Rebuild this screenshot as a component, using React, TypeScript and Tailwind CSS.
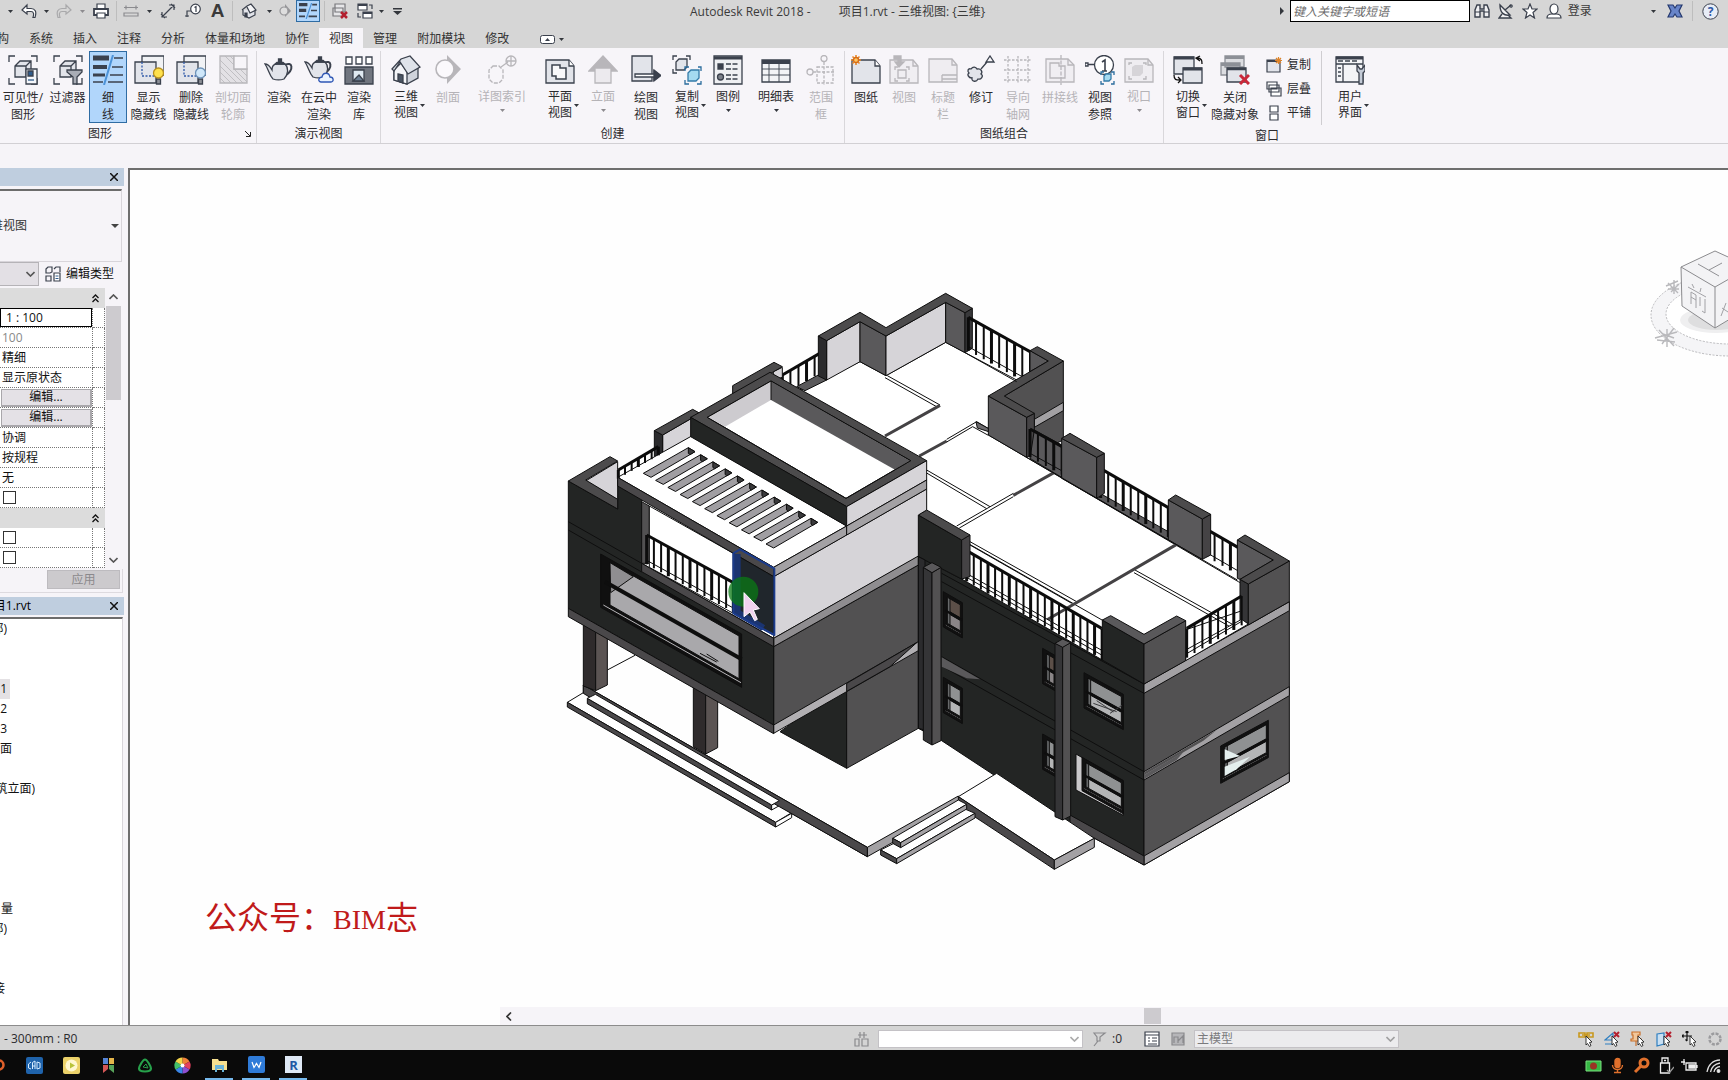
import type { ReactNode } from "react";
import clsx from "clsx";

const INK = "#3b414d";
const OFF = "#b8b6ba";
const PALE = "#e2e4ea";

type P = { children: ReactNode };

/* ---------- icons ---------- */

function Big({ children, off }: P & { off?: boolean }) {
  return (
    <svg width="30" height="30" viewBox="0 0 30 30" fill="none" stroke={off ? OFF : INK} strokeWidth="1.3">
      {children}
    </svg>
  );
}

function Small({ children }: P) {
  return (
    <svg width="16" height="16" viewBox="0 0 16 16" fill="none" stroke={INK} strokeWidth="1.2" className="shrink-0">
      {children}
    </svg>
  );
}

function Caret({ off }: { off?: boolean }) {
  return (
    <svg width="5" height="3" viewBox="0 0 5 3" className="shrink-0">
      <path d="M0 0h5L2.5 3z" fill={off ? "#8d8b8f" : "#33363c"} />
    </svg>
  );
}

const corners = "M1 7V1h6M23 1h6v6M29 23v6h-6M7 29H1v-6";
const cube = "M7 11l5-5h11v11l-5 5H7zM7 11h11v11M18 11l5-5";
const burst = "M5 0v10M0 5h10M1.5 1.5l7 7M8.5 1.5l-7 7";

const icons = {
  visibility: (
    <Big>
      <path d={corners} />
      <path d={cube} fill={PALE} />
      <path d="M18 14h11v15H18z" fill="#f4f6fa" />
      <path d="M20 16h5v5h-5z" fill="#2f5c8c" />
      <path d="M20 25h6" stroke="#2f5c8c" />
    </Big>
  ),
  filter: (
    <Big>
      <path d={corners} />
      <path d={cube} fill={PALE} />
      <path d="M14 15h15v2l-5 5v7h-4v-7l-6-5z" fill="#a9adb6" />
    </Big>
  ),
  thin: (
    <Big>
      <path d="M0 3h16" strokeWidth="5" />
      <path d="M0 12h14" strokeWidth="4" />
      <path d="M0 20h12" strokeWidth="3" />
      <path d="M0 27h10M21 3h9M19 12h11M17 20h13M15 27h15" strokeWidth="1.5" />
      <path d="M20 0L11 30" stroke="#4d93d8" strokeWidth="2" />
    </Big>
  ),
  showHidden: (
    <Big>
      <path d="M8 1h22v19H8z" fill="#f1f2f5" />
      <path d="M1 7h21v21H1z" fill={PALE} />
      <path d="M8 7v14h14" stroke="#3159a8" strokeDasharray="2 1.5" />
      <path d="M22.500 24h4v5h-4z" fill="#8c8f96" />
      <circle cx="24.500" cy="18" r="5" fill="#ffe14d" stroke="#b8901f" />
    </Big>
  ),
  removeHidden: (
    <Big>
      <path d="M8 1h22v19H8z" fill="#f1f2f5" />
      <path d="M1 7h21v21H1z" fill={PALE} />
      <path d="M8 7v14h14" stroke="#3159a8" strokeDasharray="2 1.5" />
      <path d="M22.500 24h4v5h-4z" fill="#8c8f96" />
      <circle cx="24.500" cy="18" r="5" fill="#cfe7fa" stroke="#6d92b8" />
    </Big>
  ),
  cutProfile: (
    <Big off>
      <path d="M2 1h14v13h13v14H2z" fill="#e3e1e5" />
      <path d="M16 1h13v13H16z" fill="#f7f5f9" />
      <path d="M2 5l23 23M2 11l17 17M2 17l11 11M2 23l5 5M7 1l9 9M16 14l13 13M12 1l4 4M22 14l7 7" strokeWidth=".8" />
    </Big>
  ),
  teapot: (
    <Big>
      <path d="M21 10c7-4 10 4 0 11" strokeWidth="2" />
      <path d="M1 9c4 0 5 3 7 6 0-4 2-6 5-6h8c4 4 3 11-1 15-3 1-8 1-11 0-4-4-4-9-8-15z" fill={PALE} />
      <path d="M11 9c2-3 8-3 10 0zM14.500 6h3V4h-3z" fill={INK} />
    </Big>
  ),
  teapotCloud: (
    <Big>
      <path d="M20 8c7-4 10 4 0 11" strokeWidth="2" />
      <path d="M1 7c4 0 5 3 7 6 0-4 2-6 5-6h8c4 4 3 11-1 15-3 1-8 1-11 0-4-4-4-9-8-15z" fill={PALE} />
      <path d="M11 7c2-3 8-3 10 0zM14.500 4h3V2h-3z" fill={INK} />
      <path d="M17 27c-4-1-2-5 1-5 1-5 7-5 8 0 4 0 4 5 1 5z" fill="#eaf3ff" stroke="#2f57b5" />
    </Big>
  ),
  gallery: (
    <Big>
      <path d="M2 2h6v7H2zM12 2h6v7h-6zM22 2h6v7h-6z" fill="#fff" />
      <path d="M1 12h28v17H1z" fill="#70757f" />
      <path d="M9 15h11v11H9z" fill="#dfe9f2" />
      <path d="M9 26l6-6 5 6z" fill="#6d8096" />
    </Big>
  ),
  house: (
    <Big>
      <path d="M3 15v10l13 4 11-6V12L18 3z" fill="#cfd3db" />
      <path d="M3 15l7-7 6 9v12L3 25z" fill="#f4f5f8" />
      <path d="M1 14l9-10L19 1l10 11-12 7L9 7l-6 9z" fill="#dfe3ea" />
      <path d="M7 19l5 1v8l-5-2z" fill="#4b5563" />
    </Big>
  ),
  section: (
    <Big off>
      <path d="M14 0v5l-4 9 4 10v5l14-15z" fill="#b8b6ba" stroke="none" />
      <path d="M12 0v30" stroke="none" />
      <circle cx="12" cy="14" r="9" fill="#fbf9fc" strokeWidth="1.600" />
    </Big>
  ),
  callout: (
    <Big off>
      <path d="M6 11h6l4 4v9l-4 4H6l-4-4v-9z" strokeDasharray="4 1.500" />
      <path d="M14 12l7-5M19 6h10M24 1v10" />
      <circle cx="24" cy="6" r="5" />
    </Big>
  ),
  plan: (
    <Big>
      <path d="M1 5h23l5 6v17H1z" fill={PALE} />
      <path d="M24 5v6h5" fill="#fff" />
      <path d="M7 10h8v3h6v11H11v-3H7z" fill="#f8f8fa" strokeWidth="1.500" />
    </Big>
  ),
  elevation: (
    <Big off>
      <path d="M15 1l14 15H1z" fill="#b8b6ba" />
      <path d="M7 13h16v15H7z" fill="#eceaee" />
    </Big>
  ),
  drafting: (
    <Big>
      <path d="M1 1h20v25H1z" fill={PALE} />
      <path d="M4 19h19v-3l6 4.500-6 4.500v-3H4z" fill="#fff" />
      <path d="M23 15l7 5.500-7 5.500z" fill={INK} />
    </Big>
  ),
  duplicate: (
    <Big>
      <path d="M1 5V1h4M14 1h4v4M1 14v4h4" />
      <path d="M4 7l3-3h8v8l-3 3H4z" fill={PALE} />
      <path d="M13 16v-4h4M26 12h3v4M29 26v3h-4M17 29h-4v-4" stroke="#2b6c9d" />
      <path d="M16 18l3-3h8v8l-3 3h-8z" fill="#a5daf0" stroke="#357ba8" />
    </Big>
  ),
  legend: (
    <Big>
      <path d="M1 1h28v28H1z" fill="#eff0f3" />
      <path d="M1 3h28" strokeWidth="3" />
      <path d="M5 9h5v5H5z" fill={INK} />
      <circle cx="7.500" cy="22" r="3" fill="#7b8089" />
      <path d="M13 9h13M13 14h13M13 20h13M13 24h13" strokeDasharray="5 1.500" />
    </Big>
  ),
  schedule: (
    <Big>
      <path d="M1 5h28v22H1z" fill="#f3f4f7" />
      <path d="M1 7h28" strokeWidth="4" />
      <path d="M8 9v18M1 14h28M1 20h28M18 9v18" strokeWidth=".9" />
    </Big>
  ),
  scopeBox: (
    <Big off>
      <path d="M11 12h16v16H11zM18 7v23M7 17h22" strokeDasharray="3 1.500" />
      <circle cx="18" cy="3.500" r="3" />
      <circle cx="4" cy="17" r="3" />
    </Big>
  ),
  sheet: (
    <Big>
      <path d="M1 5h23l5 6v17H1z" fill={PALE} />
      <path d="M24 5v6h5" fill="#fff" />
      <path d={burst} stroke="#e8892b" strokeWidth="1.600" />
      <circle cx="5" cy="5" r="2.500" fill="#ffc864" stroke="#d56a15" />
    </Big>
  ),
  placeView: (
    <Big off>
      <path d="M1 5h23l5 6v17H1z" fill="#f0eef2" />
      <path d="M24 5v6h5M6 15v-3h3M17 12h3v3M20 23v3h-3M9 26H6v-3M9 15h8v8H9z" />
      <path d="M5 1h7v6h3l-5 5-4-5h3V4H5z" fill="#b8b6ba" />
    </Big>
  ),
  titleBlock: (
    <Big off>
      <path d="M1 4h23l5 6v17H1z" fill="#efedf1" />
      <path d="M24 4v6h5M14 20h15M14 20v7M14 24h15" />
    </Big>
  ),
  revision: (
    <Big>
      <path d="M5 14c2-3 5-2 6 0 4-1 6 3 4 5 3 2 0 6-3 5-2 4-7 2-6-1-4 0-5-4-3-5-2-2-1-5 2-4z" fill={PALE} />
      <path d="M15 14L21 7M20 7l4-6 4 6z" />
    </Big>
  ),
  guideGrid: (
    <Big off>
      <path d="M5 1v28M15 1v28M25 1v28M1 5h28M1 15h28M1 25h28" strokeDasharray="2.500 1.500" />
    </Big>
  ),
  matchline: (
    <Big off>
      <path d="M1 4h22l6 6v17H1z" fill="#f0eef2" />
      <path d="M23 4v6h6M5 8h9v3h6v12H5z" />
      <path d="M16 0v30" strokeDasharray="4 1.500" />
    </Big>
  ),
  viewRef: (
    <Big>
      <path d="M0 8h3v3H0zM3 9.500h7" />
      <circle cx="19" cy="10" r="9.500" fill="#fff" />
      <path d="M17 7l3-2v11M17 16h5" strokeWidth="1.600" />
      <path d="M16 20v-3h3M26 17h3v3M29 26v3h-3M19 29h-3v-3" stroke="#2b6c9d" />
      <path d="M19 21l2-2h5v5l-2 2h-5z" fill="#a5daf0" stroke="#357ba8" />
    </Big>
  ),
  viewport: (
    <Big off>
      <path d="M1 4h23l5 6v17H1z" fill="#efedf1" />
      <path d="M24 4v6h5M5 10V8h3M19 8h3v2M22 21v3h-3M8 24H5v-3" />
      <path d="M8 12l3-2h8v8l-3 3H8z" fill="#d6d4d8" stroke="none" />
    </Big>
  ),
  switchWin: (
    <Big>
      <path d="M1 2h20v17H1z" fill={PALE} />
      <path d="M1 3h20" strokeWidth="3" />
      <path d="M10 13h19v15H10z" fill={PALE} />
      <path d="M10 14h19" strokeWidth="3" />
      <path d="M24 3c5 0 5 3 5 6M27 1l-4 2 4 3M1 20c0 5 2 5 6 5M5 22l3 3-3 3" stroke="#111" />
    </Big>
  ),
  closeHidden: (
    <Big>
      <path d="M5 1h19v11H5zM1 8h19v12H1z" fill="#dcdde1" stroke="#8d9097" />
      <path d="M5 2.500h19M1 9.500h19" strokeWidth="3" stroke="#8d9097" />
      <path d="M7 13h19v14H7z" fill={PALE} />
      <path d="M7 14h19" strokeWidth="2.500" />
      <path d="M20 20l9 9M29 20l-9 9" stroke="#c9283a" strokeWidth="3" />
    </Big>
  ),
  userUi: (
    <Big>
      <path d="M1 2h27v25H1z" fill="#f3f4f7" />
      <path d="M1 3h27" strokeWidth="3" />
      <path d="M3 6h5M10 6h5M17 6h5M1 9h27M8 9v18M3 13h3M3 17h3M3 21h3" />
      <path d="M22 10v6l2 2v11h4V18l2-2v-6l-3 4h-2z" fill="#c3cad6" />
    </Big>
  ),
};

type Tool = { label: string[]; icon: keyof typeof icons; w: string; off?: boolean; on?: boolean; drop?: boolean };

const graphics: Tool[] = [
  { label: ["可见性/", "图形"], icon: "visibility", w: "w-[46px]" },
  { label: ["过滤器"], icon: "filter", w: "w-[43px]" },
  { label: ["细", "线"], icon: "thin", w: "w-[38px]", on: true },
  { label: ["显示", "隐藏线"], icon: "showHidden", w: "w-[43px]" },
  { label: ["删除", "隐藏线"], icon: "removeHidden", w: "w-[42px]" },
  { label: ["剖切面", "轮廓"], icon: "cutProfile", w: "w-[42px]", off: true },
];

const present: Tool[] = [
  { label: ["渲染"], icon: "teapot", w: "w-10" },
  { label: ["在云中", "渲染"], icon: "teapotCloud", w: "w-10" },
  { label: ["渲染", "库"], icon: "gallery", w: "w-10" },
];

const create: Tool[] = [
  { label: ["三维", "视图"], icon: "house", w: "w-10", drop: true },
  { label: ["剖面"], icon: "section", w: "w-11", off: true },
  { label: ["详图索引"], icon: "callout", w: "w-16", off: true, drop: true },
  { label: ["平面", "视图"], icon: "plan", w: "w-[52px]", drop: true },
  { label: ["立面"], icon: "elevation", w: "w-[34px]", off: true, drop: true },
  { label: ["绘图", "视图"], icon: "drafting", w: "w-[52px]" },
  { label: ["复制", "视图"], icon: "duplicate", w: "w-[30px]", drop: true },
  { label: ["图例"], icon: "legend", w: "w-[52px]", drop: true },
  { label: ["明细表"], icon: "schedule", w: "w-11", drop: true },
  { label: ["范围", "框"], icon: "scopeBox", w: "w-[46px]", off: true },
];

const sheets: Tool[] = [
  { label: ["图纸"], icon: "sheet", w: "w-10" },
  { label: ["视图"], icon: "placeView", w: "w-9", off: true },
  { label: ["标题", "栏"], icon: "titleBlock", w: "w-[42px]", off: true },
  { label: ["修订"], icon: "revision", w: "w-[34px]" },
  { label: ["导向", "轴网"], icon: "guideGrid", w: "w-10", off: true },
  { label: ["拼接线"], icon: "matchline", w: "w-11", off: true },
  { label: ["视图", "参照"], icon: "viewRef", w: "w-9" },
  { label: ["视口"], icon: "viewport", w: "w-[42px]", off: true, drop: true },
];

function ToolButton({ label, icon, w, off, on, drop }: Tool) {
  return (
    <button
      type="button"
      className={clsx(
        "relative flex h-[72px] shrink-0 flex-col items-center whitespace-nowrap pt-1 text-xs",
        w,
        drop ? "leading-4" : "leading-[17px]",
        off ? "text-[#b5b3b7]" : "text-[#2b2b2e]",
        on && "bg-[#b1d6fb] outline outline-1 -outline-offset-1 outline-[#2f6ca3]"
      )}
    >
      {icons[icon]}
      <span className="mt-1 block">
        {label.map((line) => (
          <span key={line} className="block">
            {line}
          </span>
        ))}
      </span>
      {drop && label.length === 1 && (
        <span className="mt-1 flex">
          <Caret off={off} />
        </span>
      )}
      {drop && label.length === 2 && (
        <span className="absolute left-1/2 top-[53px] ml-[14px] flex">
          <Caret off={off} />
        </span>
      )}
    </button>
  );
}

function Panel({ title, children, pad }: P & { title: string; pad?: string }) {
  return (
    <section className="flex shrink-0 flex-col border-r border-[#d9d7db]">
      <div className={clsx("flex", pad)}>{children}</div>
      <h2 className="pt-px text-center text-xs leading-5 text-[#2b2b2e]">{title}</h2>
    </section>
  );
}

/* ---------- title bar ---------- */

function QuickItem({ w, children, on }: P & { w: string; on?: boolean }) {
  return (
    <button
      type="button"
      className={clsx("flex h-[22px] shrink-0 items-center justify-center", w, on && "border border-[#2f6ca3] bg-[#b1d6fb]")}
    >
      {children}
    </button>
  );
}

function Sep() {
  return <span className="h-5 w-px shrink-0 bg-[#bdbdbd]" />;
}

function TitleBar() {
  return (
    <div className="flex h-[22px] items-center text-xs text-[#3a3a3a]">
      <div className="flex w-[690px] shrink-0 items-center">
        <QuickItem w="w-5"><Caret /></QuickItem>
        <QuickItem w="w-[18px]">
          <Small><path d="M6 2L1 7l5 4V8.500h4c3 0 3 3 2 6h2c2-6 0-9-4-9H6z" fill="#fff" /></Small>
        </QuickItem>
        <QuickItem w="w-4"><Caret /></QuickItem>
        <QuickItem w="w-5">
          <Small><path d="M10 2l5 5-5 4V8.500H6c-3 0-3 3-2 6H2c-2-6 0-9 4-9h4z" stroke="#a9a9ab" /></Small>
        </QuickItem>
        <QuickItem w="w-4"><Caret off /></QuickItem>
        <QuickItem w="w-[22px]">
          <Small>
            <path d="M4 1h8v5H4z" fill="#fff" />
            <path d="M1 6h14v6H1z" fill="#fff" strokeWidth="1.800" />
            <path d="M4 10h8v5H4z" fill="#fff" />
          </Small>
        </QuickItem>
        <span className="w-1" />
        <Sep />
        <QuickItem w="w-[28px]">
          <Small><path d="M1 4.500h14M3 2.500v4M13 2.500v4M1 10h14v3H1z" stroke="#8b8b8f" /></Small>
        </QuickItem>
        <QuickItem w="w-2"><Caret /></QuickItem>
        <QuickItem w="w-[30px]">
          <Small><path d="M2 14L14 2M9 2h5v5M2 9v5h5M1 11l4 4M11 1l4 4" /></Small>
        </QuickItem>
        <QuickItem w="w-5">
          <Small>
            <path d="M2 14V8h4M0 13h4" />
            <circle cx="10.500" cy="6" r="4.800" fill="#fff" />
            <path d="M9.500 4.500l1.500-1V9" />
          </Small>
        </QuickItem>
        <QuickItem w="w-[29px]">
          <span className="font-['Liberation_Sans',sans-serif] text-[19px] font-bold leading-[22px]">A</span>
        </QuickItem>
        <Sep />
        <QuickItem w="w-8">
          <Small>
            <path d="M2 7v5l6 3 6-3V6" fill={PALE} />
            <path d="M1 7l5-4 4-2 5 6-6 3-3-6" fill="#f5f5f7" />
            <path d="M4 10h2v4H4z" fill={INK} />
          </Small>
        </QuickItem>
        <QuickItem w="w-2"><Caret /></QuickItem>
        <QuickItem w="w-[23px]">
          <Small>
            <path d="M8 1l6 7-6 6z" fill="#97979a" stroke="none" />
            <circle cx="7" cy="8" r="4" fill="#dedede" stroke="#97979a" />
          </Small>
        </QuickItem>
        <QuickItem w="w-6" on>
          <svg width="18" height="16" viewBox="0 0 30 30" preserveAspectRatio="none" fill="none" stroke={INK}>
            <path d="M0 3h14M0 14h12" strokeWidth="6" />
            <path d="M0 25h10M22 3h8M20 14h10M16 25h14" strokeWidth="3" />
            <path d="M21 0L12 30" stroke="#4d93d8" strokeWidth="2" />
          </svg>
        </QuickItem>
        <span className="w-1" />
        <Sep />
        <QuickItem w="w-[30px]">
          <Small>
            <path d="M3 1h10v8H3zM1 5h10v8H1z" fill="#e6e6e8" stroke="#77777b" />
            <path d="M9 9l6 6M15 9l-6 6" stroke="#b3202f" strokeWidth="2.500" />
          </Small>
        </QuickItem>
        <QuickItem w="w-5">
          <Small>
            <path d="M1 1h9v6H1zM6 9h9v6H6z" fill="#fff" />
            <path d="M1 2h9M6 10h9" strokeWidth="2" />
            <path d="M12 2h3v4M1 10v4h3" />
          </Small>
        </QuickItem>
        <QuickItem w="w-3"><Caret /></QuickItem>
        <QuickItem w="w-5">
          <svg width="9" height="7" viewBox="0 0 9 7"><path d="M0 0h9v1.500H0zM0 3h9L4.500 7z" fill="#33363c" /></svg>
        </QuickItem>
      </div>
      <h1 className="flex min-w-0 flex-1 gap-7 whitespace-nowrap pt-px">
        <span>Autodesk Revit 2018 -</span>
        <span>项目1.rvt - 三维视图: {"{三维}"}</span>
      </h1>
      <svg width="4" height="8" viewBox="0 0 4 8" className="mr-[6px]"><path d="M0 0v8l4-4z" fill="#33363c" /></svg>
      <input
        type="text"
        aria-label="键入关键字或短语"
        placeholder="键入关键字或短语"
        className="h-[22px] w-[180px] border border-black bg-white px-[2px] text-xs italic placeholder:text-[#6b6b6b]"
      />
      <div className="flex w-[258px] shrink-0 items-center">
        <QuickItem w="w-6">
          <Small>
            <path d="M1 14V7l2-5h3v4h4V2h3l2 5v7h-5V8H6v6z" fill="#f1f1f3" strokeWidth="1.400" />
            <path d="M1 9h5M10 9h5" />
          </Small>
        </QuickItem>
        <QuickItem w="w-6">
          <Small>
            <path d="M2 2c0 8 4 11 10 10zM7 7l6-5M4 11l-3 4h12l-3-3" fill="#f1f1f3" strokeWidth="1.400" />
            <circle cx="13" cy="3" r="1.200" />
          </Small>
        </QuickItem>
        <QuickItem w="w-6">
          <Small><path d="M8 1l2 5h5l-4 3.500 1.500 5.500L8 12l-4.500 3L5 9.500 1 6h5z" fill="#fff" /></Small>
        </QuickItem>
        <QuickItem w="w-6">
          <Small>
            <path d="M1 15c0-3 2-4 5-4h4c3 0 5 1 5 4z" fill="#fff" />
            <ellipse cx="8" cy="6" rx="4" ry="5" fill="#fff" />
          </Small>
        </QuickItem>
        <button type="button" className="w-[28px] whitespace-nowrap text-center">登录</button>
        <span className="w-[56px]" />
        <QuickItem w="w-2"><Caret /></QuickItem>
        <span className="w-1" />
        <QuickItem w="w-[27px]">
          <Small><path d="M1 2h5l2 3 2-3h5l-3 6 3 6h-5l-2-3-2 3H1l3-6z" fill="#6885c9" stroke="#25396f" /></Small>
        </QuickItem>
        <span className="w-1" />
        <Sep />
        <QuickItem w="w-[35px]">
          <svg width="17" height="17" viewBox="0 0 17 17">
            <circle cx="8.500" cy="8.500" r="7.700" fill="#e8edf7" stroke={INK} />
            <text x="8.500" y="13" textAnchor="middle" fontSize="12" fontWeight="bold" fill="#2e57a5">?</text>
          </svg>
        </QuickItem>
      </div>
    </div>
  );
}

const tabs = ["系统", "插入", "注释", "分析", "体量和场地", "协作", "视图", "管理", "附加模块", "修改"];

function Tabs() {
  return (
    <nav className="mt-[6px] flex h-5 items-start text-xs text-[#333]" aria-label="功能区">
      <a href="#arch" className="flex w-[19px] shrink-0 justify-end overflow-hidden pr-[10px] leading-[22px]">构</a>
      {tabs.map((t) => (
        <a
          key={t}
          href={"#" + t}
          className={clsx("h-5 shrink-0 whitespace-nowrap px-[10px] leading-[22px]", t === "视图" && "bg-[#f7f5f9]")}
        >
          {t}
        </a>
      ))}
      <button type="button" aria-label="最小化功能区" className="ml-[21px] flex h-[22px] items-center gap-1">
        <svg width="15" height="9" viewBox="0 0 15 9">
          <rect x=".5" y=".5" width="14" height="8" rx="2" fill="#fff" stroke={INK} />
          <path d="M5 6h5L7.500 3z" fill={INK} />
        </svg>
        <Caret />
      </button>
    </nav>
  );
}

function Ribbon() {
  return (
    <div className="flex h-24 overflow-hidden border-b border-[#d2d0d4] bg-[#f7f5f9] pt-[3px]">
      <section className="flex w-[257px] shrink-0 flex-col border-r border-[#d9d7db]">
        <div className="flex">{graphics.map((t) => <ToolButton key={t.icon} {...t} />)}</div>
        <div className="flex items-center pl-[88px] pt-px text-xs leading-5">
          <h2 className="flex-1 text-[#2b2b2e]">图形</h2>
          <svg width="6" height="6" viewBox="0 0 6 6" className="mr-[5px]" fill="none" stroke="#222"><path d="M0 0l5 5M5.500 1v4.500H1" /></svg>
        </div>
      </section>
      <Panel title="演示视图" pad="pl-[2px] pr-px">{present.map((t) => <ToolButton key={t.icon} {...t} />)}</Panel>
      <Panel title="创建" pad="pl-[5px]">{create.map((t) => <ToolButton key={t.icon} {...t} />)}</Panel>
      <Panel title="图纸组合" pad="pl-px pr-[3px]">{sheets.map((t) => <ToolButton key={t.icon} {...t} />)}</Panel>
      <section className="shrink-0">
        <div className="flex pl-1">
          <ToolButton label={["切换", "窗口"]} icon="switchWin" w="w-10" drop />
          <ToolButton label={["关闭", "隐藏对象"]} icon="closeHidden" w="w-[54px]" />
          <div className="flex w-[60px] flex-col border-r border-[#cfcdd1] pl-1 pt-[2px] text-xs text-[#2b2b2e]">
            <button type="button" className="flex h-6 items-center gap-[5px]">
              <Small>
                <path d="M1 3h13v12H1z" fill={PALE} />
                <path d="M1 4h13" strokeWidth="2" />
                <path d="M12.500 0v7M9 3.500h7M10 1l5 5M15 1l-5 5" stroke="#e08326" />
              </Small>
              复制
            </button>
            <button type="button" className="flex h-6 items-center gap-[5px]">
              <Small><path d="M1 1h10v7H1zM3 4h10v7H3zM5 7h10v8H5z" fill="#fff" /></Small>
              层叠
            </button>
            <button type="button" className="flex h-6 items-center gap-[5px]">
              <Small><path d="M4 1h8v6H4zM4 9h8v6H4z" fill="#fff" /></Small>
              平铺
            </button>
          </div>
          <span className="w-2" />
          <ToolButton label={["用户", "界面"]} icon="userUi" w="w-10" drop />
        </div>
        <h2 className="pt-px text-center text-xs leading-5 text-[#2b2b2e]">窗口</h2>
      </section>
    </div>
  );
}

/* ---------- left side ---------- */

function Close() {
  return (
    <button type="button" aria-label="关闭" className="flex h-4 w-4 items-center justify-center">
      <svg width="8" height="8" viewBox="0 0 8 8" stroke="#111" strokeWidth="1.500"><path d="M0 0l8 8M8 0L0 8" /></svg>
    </button>
  );
}

function Chevron({ up }: { up?: boolean }) {
  return (
    <svg width="9" height="6" viewBox="0 0 9 6" fill="none" stroke="#555" strokeWidth="1.600">
      <path d={up ? "M.5 5l4-4 4 4" : "M.5 1l4 4 4-4"} />
    </svg>
  );
}

const rows = ["#", "scale", "100", "精细", "显示原状态", "编辑1", "编辑2", "协调", "按规程", "无", "[]1", "#", "[]2", "[]3"];

function Cell({ row }: { row: string }) {
  if (row === "scale")
    return <input aria-label="视图比例" defaultValue="1 : 100" className="block h-[19px] w-[92px] border border-black bg-white px-[5px] text-xs" />;
  if (row.startsWith("编辑"))
    return (
      <button type="button" className="ml-px block h-[18px] w-[91px] border border-b-2 border-r-2 border-[#a9a7ab] bg-[#e4e1e6] text-xs leading-[14px]">
        编辑...
      </button>
    );
  if (row.startsWith("[]"))
    return <input type="checkbox" aria-label="启用" className="ml-[3px] block h-[13px] w-[13px] appearance-none border border-[#333] bg-white" />;
  return <span className={clsx("block pl-[2px] leading-[18px]", row === "100" && "text-[#8a8a8a]")}>{row}</span>;
}

function Properties() {
  return (
    <section aria-label="属性">
      <div className="flex h-[18px] items-center justify-end bg-[#bfcedf] pr-[2px]"><Close /></div>
      <div className="mr-[2px] mt-[3px] flex h-[73px] items-center justify-between border-b border-r border-t-2 border-b-[#d8d5da] border-r-[#d8d5da] border-t-[#6c6c6c] pr-[2px] text-xs text-[#333]">
        <span className="flex w-[27px] justify-end overflow-hidden whitespace-nowrap">维视图</span>
        <svg width="8" height="4" viewBox="0 0 8 4"><path d="M0 0h8L4 4z" fill="#444" /></svg>
      </div>
      <div className="flex h-6 items-center text-xs">
        <div className="relative">
          <select aria-label="类型" className="block h-6 w-[39px] appearance-none border border-l-0 border-[#b5b3b7] bg-[#e3e0e5]" />
          <span className="pointer-events-none absolute right-1 top-[9px]"><Chevron /></span>
        </div>
        <button type="button" className="ml-[6px] flex items-center gap-[5px] whitespace-nowrap text-[#111]">
          <Small>
            <path d="M1 3l2-2h4v5l-2 1H1zM9 3l2-2h4v5M1 10h5v5H1z" />
            <path d="M9 7h6v8H9z" fill="#fff" />
            <path d="M10.500 10h3M10.500 12.500h3" stroke="#2f5c8c" />
          </Small>
          编辑类型
        </button>
      </div>
      <div className="mt-[2px] flex h-[281px] overflow-hidden">
        <table className="w-[105px] table-fixed border-separate border-spacing-0 self-start bg-white text-xs text-[#111]">
          <colgroup>
            <col className="w-[93px]" />
            <col className="w-3" />
          </colgroup>
          <tbody>
            {rows.map((row, i) =>
              row === "#" ? (
                <tr key={i}>
                  <td colSpan={2} className="h-5 bg-[#dcdcdc] p-0">
                    <svg width="7" height="9" viewBox="0 0 7 9" fill="none" stroke="#111" strokeWidth="1.300" className="ml-[92px]">
                      <path d="M.5 4l3-3 3 3M.5 8l3-3 3 3" />
                    </svg>
                  </td>
                </tr>
              ) : (
                <tr key={i}>
                  <td className="h-5 whitespace-nowrap border-b border-r border-dotted border-[#777] p-0"><Cell row={row} /></td>
                  <td className="border-b border-r border-dotted border-[#777] p-0" />
                </tr>
              )
            )}
          </tbody>
        </table>
        <div className="ml-px flex w-[15px] flex-col items-center">
          <span className="flex h-[18px] items-center"><Chevron up /></span>
          <span className="h-[94px] w-full bg-[#cdcbcf]" />
          <span className="mb-[6px] mt-auto"><Chevron /></span>
        </div>
      </div>
      <div className="mr-px flex h-6 border-b border-r border-[#dddadf] pr-[2px] pt-px">
        <button type="button" disabled className="ml-auto h-[19px] w-[73px] border border-[#bdbbbf] bg-[#cccacd] text-xs leading-4 text-[#8b898c]">应用</button>
      </div>
    </section>
  );
}

const tree = [
  { id: 1, text: "部)", w: "w-[7px]" },
  { id: 2, text: "" },
  { id: 3, text: "" },
  { id: 4, text: "1", w: "w-[10px]", on: true },
  { id: 5, text: "2", w: "w-[7px]" },
  { id: 6, text: "3", w: "w-[7px]" },
  { id: 7, text: "面", w: "w-3" },
  { id: 8, text: "" },
  { id: 9, text: "筑立面)", w: "w-[35px]" },
  { id: 10, text: "" },
  { id: 11, text: "" },
  { id: 12, text: "" },
  { id: 13, text: "" },
  { id: 14, text: "" },
  { id: 15, text: "量", w: "w-[13px]" },
  { id: 16, text: "部)", w: "w-[7px]" },
  { id: 17, text: "" },
  { id: 18, text: "" },
  { id: 19, text: "接", w: "w-[5px]" },
];

function Browser() {
  return (
    <section className="mt-1 flex min-h-0 flex-1 flex-col" aria-label="项目浏览器">
      <div className="flex h-[18px] items-center justify-between bg-[#bfcedf] pr-[2px] text-xs">
        <span className="flex w-[31px] justify-end overflow-hidden whitespace-nowrap">目1.rvt</span>
        <Close />
      </div>
      <ul className="mr-px mt-[2px] min-h-0 flex-1 border-r border-t-2 border-r-[#d8d5da] border-t-[#6c6c6c] bg-white text-xs text-[#111]">
        {tree.map((n) => (
          <li key={n.id} className="h-5 leading-5">
            <span className={clsx("flex justify-end overflow-hidden whitespace-nowrap", n.w, n.on && "bg-[#e4e1e4] pr-[3px]")}>{n.text}</span>
          </li>
        ))}
      </ul>
    </section>
  );
}

/* ---------- model ---------- */

const BLACKISH = "#232524";
const TOP = "#4c4b4c";
const WALL = "#525152";
const INNER = "#5a595b";
const LIGHT = "#d6d4d8";
const BAND = "#a3a1a4";
const EDGE = "#4a484a";

function F({ p, c = "#fff" }: { p: string; c?: string }) {
  return <polygon points={p} fill={c} />;
}

function Rail({ a, b, h, n, foot = true }: { a: [number, number]; b: [number, number]; h: number; n: number; foot?: boolean }) {
  const posts = Array.from({ length: n + 1 }, (_, i) => {
    const t = i / n;
    return { x: a[0] + (b[0] - a[0]) * t, y: a[1] + (b[1] - a[1]) * t, w: i % 3 === 0 ? 9 : 6 };
  });
  return (
    <g stroke="#0c0c0c">
      {posts.map((q) => <line key={q.x} x1={q.x} y1={q.y} x2={q.x} y2={q.y + h} strokeWidth={q.w} />)}
      <line x1={a[0]} y1={a[1]} x2={b[0]} y2={b[1]} strokeWidth="9" />
      {foot && <line x1={a[0]} y1={a[1] + h - 12} x2={b[0]} y2={b[1] + h - 12} strokeWidth="3" />}
    </g>
  );
}

function Pane({ x, y, w, h, s, warm }: { x: number; y: number; w: number; h: number; s: number; warm?: boolean }) {
  const at = (px: number, py: number) => `${x + px},${y + py + px * s}`;
  const mid = h * 0.5;
  return (
    <g>
      <F p={[at(0, 0), at(w, 0), at(w, h), at(0, h)].join(" ")} c="#111" />
      <F p={[at(5, h - 12), at(w - 4, h - 12), at(w - 4, h - 8), at(5, h - 8)].join(" ")} c="#9b999c" />
      <F p={[at(12, 10), at(w - 6, 10), at(w - 6, mid - 4), at(12, mid - 4)].join(" ")} c={warm ? "#5c4f48" : "#8f9192"} />
      <F p={[at(12, mid + 4), at(w - 6, mid + 4), at(w - 6, h - 18), at(12, h - 18)].join(" ")} c={warm ? "#8a8587" : "#b4b5b6"} />
      <F p={[at(12, 10), at(20, 10), at(20, h - 18), at(12, h - 18)].join(" ")} c="#67696a" />
      <polyline points={[at(5, mid), at(w, mid)].join(" ")} strokeWidth="7" fill="none" />
    </g>
  );
}

const slots = Array.from({ length: 11 }, (_, i) => i);

function Building() {
  return (
    <svg
      width="740"
      height="610"
      viewBox="0 0 2220 1830"
      className="absolute left-[420px] top-[110px]"
      stroke="#0e0e0e"
      strokeWidth="3"
      strokeLinejoin="round"
      role="img"
      aria-label="三维模型"
    >
      {/* roof deck */}
      <F p="560,420 930,245 1008,287 1187,187 1400,300 1315,465 2065,905 2170,960 1782,1092 1105,705 890,680" />
      <g fill="none">
        <path d="M1012,287L1170,375M1005,293L1158,379M1130,570L1320,680M1130,579L1310,686M1260,785L1580,965M1260,795L1565,970M1755,870L2060,1040M1752,878L2040,1040" />
        <path d="M1170,376L1005,468M1880,793L1490,1020M1190,483L1108,528M1512,578L1390,646" strokeWidth="9" stroke="#444244" />
        <path d="M1190,478L1280,425L1316,446M1190,486L1268,440L1315,466M1390,640L1220,738M1390,650L1228,744" />
        <path d="M1278,425L1316,446V455L1282,444z" fill="#6d6b6e" />
      </g>

      {/* back parapets */}
      <Rail a={[697, 285]} b={[818, 215]} h={60} n={5} foot={false} />
      <F p="765,332 740,320 805,285 830,300" c={INNER} />
      <F p="830,182 930,125 930,245 830,300" c={LIGHT} />
      <F p="930,125 1008,168 1008,287 930,245" c={INNER} />
      <F p="1008,168 1187,67 1187,187 1008,287" c={LIGHT} />
      <F p="1187,67 1245,98 1245,218 1187,187" c={INNER} />
      <F p="1245,98 1267,85 1267,205 1245,218" c="#39393b" />
      <F p="805,168 830,182 830,300 805,288" c="#2b2b2d" />
      <F p="805,168 930,97 1008,143 1187,40 1267,85 1245,98 1187,67 1008,168 930,125 830,182" c={TOP} />
      <F p="670,275 697,262 697,292 670,300" c={LIGHT} />
      <F p="548,317 672,247 697,260 572,332 572,345 548,345" c={TOP} />

      {/* right rear run */}
      <Rail a={[1255, 112]} b={[1440, 215]} h={100} n={8} />
      <F p="1440,212 1495,243 1440,275" c={INNER} />
      <F p="1363,348 1540,243 1540,480 1453,520" c={WALL} />
      <F p="1453,418 1540,367 1540,392 1453,442" c={BAND} />
      <F p="1315,348 1430,412 1430,532 1315,465" c={INNER} />
      <F p="1430,412 1453,400 1453,520 1430,532" c="#454345" />
      <F p="1440,212 1462,200 1540,243 1363,348 1453,400 1430,412 1315,348 1495,243" c={TOP} />
      <F p="1453,450 1535,495 1535,592 1440,535" c={INNER} />
      <Rail a={[1440, 447]} b={[1535, 499]} h={85} n={4} />
      <F p="1650,640 1855,755 1855,780 1640,655" c={INNER} />
      <Rail a={[1652, 566]} b={[1855, 683]} h={88} n={9} foot={false} />
      <F p="1535,475 1640,532 1640,655 1535,595" c={INNER} />
      <F p="1640,532 1663,520 1663,640 1640,655" c="#454345" />
      <F p="1535,475 1560,460 1663,520 1640,532" c={TOP} />
      <Rail a={[1970, 748]} b={[2065, 803]} h={82} n={4} />
      <F p="1855,660 1957,717 1957,838 1855,780" c={INNER} />
      <F p="1957,717 1982,703 1982,825 1957,838" c="#454345" />
      <F p="1855,660 1877,645 1982,703 1957,717" c={TOP} />
      <path d="M1245,218L1400,305M1430,532L2062,900" fill="none" />
      <F p="2062,780 2170,840 2070,898 2062,895" c={INNER} />

      {/* right block */}
      <F p="1105,830 1235,897 1657,1140 1782,1092 1782,1755 1560,1635 1175,1382 1105,1345" c={BLACKISH} />
      <F p="1782,1212 2218,965 2218,1505 1782,1755" c={WALL} />
      <F p="1782,1212 2218,965 2218,992 1782,1240" c={BAND} />
      <F p="1782,1475 2218,1220 2218,1247 1782,1500" c={BAND} />
      <polygon points="1784,1476 2000,1350 1960,1382 1784,1484" fill={WALL} stroke="none" />
      <polygon points="1784,1484 1900,1416 1880,1440 1784,1496" fill={INNER} stroke="none" />
      <F p="1782,1728 2218,1478 2218,1505 1782,1755" c={BAND} />
      <F p="1560,1605 1782,1728 1782,1755 1560,1635" c={EDGE} />
      <path d="M1175,880L1782,1212M1175,905L1782,1240M1175,1130L1782,1475M1175,1158L1782,1500" fill="none" />
      <polygon points="1175,1132 1290,1198 1250,1195 1175,1160" fill={INNER} stroke="none" />
      <F p="1235,872 1657,1112 1657,1140 1235,897" />
      <Rail a={[1250, 812]} b={[1655, 1045]} h={92} n={19} />
      <F p="2070,898 2095,912 2095,1030 2070,1020" c="#353537" />
      <F p="2095,912 2218,843 2218,965 2095,1035" c={WALL} />
      <F p="2062,780 2085,765 2218,843 2095,912 2070,898 2170,840" c={TOP} />
      <F p="1907,1110 2075,1018 2095,1032 1907,1142" />
      <Rail a={[1910, 1045]} b={[2075, 948]} h={88} n={7} />
      <F p="1657,1020 1782,1092 1782,1212 1657,1140" c={BLACKISH} />
      <F p="1782,1092 1907,1022 1907,1142 1782,1212" c={WALL} />
      <F p="1657,1020 1682,1007 1782,1063 1880,1008 1907,1022 1782,1092" c={INNER} />
      <F p="1105,705 1235,780 1235,897 1105,830" c={BLACKISH} />
      <F p="1235,780 1260,765 1260,890 1235,897" c="#454345" />
      <F p="1105,705 1130,690 1260,765 1235,780" c={TOP} />
      <Pane x={1180} y={935} w={57} h={106} s={0.577} warm />
      <Pane x={1180} y={1192} w={57} h={106} s={0.577} />
      <Pane x={1478} y={1105} w={40} h={106} s={0.577} warm />
      <Pane x={1478} y={1362} w={40} h={106} s={0.577} />
      <Pane x={1602} y={1178} w={118} h={106} s={0.55} />
      <path d="M1630,1270l70,25M1640,1262l50,34M1680,1300l36,-24" fill="none" stroke="#3a3a3c" />
      <F p="1578,1422 1720,1505 1720,1606 1578,1530" c="#c9c8ca" />
      <Pane x={1596} y={1432} w={124} h={100} s={0.56} />
      <Pane x={2012} y={1398} w={143} h={112} s={-0.54} />
      <polygon points="2024,1408 2070,1428 2024,1440" fill="#e4efee" stroke="none" />
      <polygon points="2024,1460 2100,1430 2060,1468 2024,1488" fill="#e4efee" stroke="none" />

      {/* ramp, plinth and steps */}
      <F p="1225,1550 1340,1480 1633,1675 1513,1740" />
      <F p="1225,1550 1513,1740 1513,1768 1225,1578" c={EDGE} />
      <F p="1513,1740 1633,1675 1633,1702 1513,1768" c={BAND} />
      <F p="992,1710 1040,1736 1275,1600 1240,1585" />
      <F p="992,1710 1040,1736 1040,1751 992,1725" c={EDGE} />
      <F p="1040,1736 1275,1600 1275,1614 1040,1751" c={BAND} />
      <F p="952,1702 1225,1548 1225,1576 952,1730" c={BAND} />
      <F p="1028,1675 1052,1688 1250,1573 1225,1560" />
      <F p="1028,1675 1052,1688 1052,1703 1028,1690" c={EDGE} />
      <F p="1052,1688 1250,1573 1250,1587 1052,1703" c={BAND} />
      <F p="100,1215 952,1702 952,1730 100,1243" c={EDGE} />
      <F p="52,1267 100,1238 725,1598 677,1627" />
      <F p="52,1267 677,1627 677,1641 52,1281" c={EDGE} />
      <F p="677,1627 725,1600 725,1613 677,1641" />
      <F p="112,1255 665,1575 665,1590 112,1271" c={EDGE} />
      <F p="665,1575 688,1562 688,1577 665,1590" />
      <F p="100,1215 952,1702 952,1730 688,1580 136,1262 100,1240" c={EDGE} />
      <F p="112,1255 136,1243 688,1562 665,1575" />
      <path d="M172,1170L255,1126" fill="none" />

      {/* porch columns */}
      <F p="100,1030 137,1050 137,1232 100,1218" c="#2f2b2c" />
      <F p="137,1050 172,1070 172,1215 137,1232" c="#5b5453" />
      <F p="430,1218 467,1240 467,1422 430,1400" c="#2f2b2c" />
      <F p="467,1240 503,1258 503,1403 467,1422" c="#5b5453" />

      {/* left block, side walls */}
      <F p="690,1355 890,1212 890,1465" c={BLACKISH} />
      <F p="890,1212 1105,1095 1105,1345 890,1465" c={WALL} />
      <F p="671,1100 1105,855 1105,1088 671,1338" c={WALL} />
      <F p="671,1335 1105,1085 1105,1112 671,1360" c="#b1afb2" />
      <F p="890,1210 1100,1088 1020,1160 890,1234" c={EDGE} />
      <F p="671,890 1130,627 1130,690 1105,705 1105,830 671,1075" c={LIGHT} />
      <F p="671,1075 1105,828 1105,855 671,1100" c="#8f8d90" />
      <F p="1105,830 1125,840 1125,1350 1105,1345" c="#2b2b2d" />

      {/* pilasters */}
      <F p="1120,862 1146,878 1146,1395 1120,1380" c="#353537" />
      <F p="1146,878 1173,862 1173,1382 1146,1395" c={WALL} />
      <F p="1120,862 1146,848 1173,862 1146,878" c={INNER} />
      <F p="1515,1090 1538,1100 1538,1620 1515,1610" c="#353537" />
      <F p="1538,1100 1562,1088 1562,1608 1538,1620" c={WALL} />
      <F p="1515,1090 1538,1077 1562,1088 1538,1102" c={INNER} />

      {/* left block, front wall */}
      <F p="55,603 203,687 203,600 275,640 275,850 671,1075 671,1335 55,985" c={BLACKISH} />
      <F p="275,850 671,1075 671,1100 275,875" c={EDGE} />
      <F p="55,985 671,1335 671,1361 55,1010" c={EDGE} />
      <path d="M55,725L275,850M55,750L275,876" fill="none" />
      <F p="275,665 298,678 298,850 275,850" c={WALL} />
      <F p="298,678 550,820 550,1000 298,862" />
      <Rail a={[290, 765]} b={[550, 908]} h={88} n={12} />
      <F p="152,822 575,1062 575,1222 152,982" c="#101010" />
      <F p="180,848 567,1068 567,1196 180,975" c="#a9a8ab" />
      <F p="180,848 210,866 250,890 182,938" c="#8f8e91" />
      <path d="M165,905L575,1138" strokeWidth="12" />
      <path d="M160,975L573,1208" stroke="#b7b5b8" />
      <path d="M450,1120l50,26M470,1122l35,22" fill="none" />

      {/* left parapet */}
      <F p="107,603 203,545 203,660" c={LIGHT} />
      <F p="55,603 180,530 203,543 107,600 203,658 203,687" c={TOP} />
      <F p="338,465 425,415 425,470 338,520" c={LIGHT} />
      <F p="313,452 338,465 338,522 313,530" c="#2b2b2d" />
      <F p="313,452 428,388 450,400 338,465" c={TOP} />

      {/* pergola slab */}
      <F p="203,592 425,468 890,738 671,862" />
      <Rail a={[205, 570]} b={[325, 500]} h={26} n={6} foot={false} />
      <F p="203,592 671,862 671,890 203,618" c={EDGE} />
      <F p="671,862 890,738 890,765 671,890" c={BAND} />
      {slots.map((i) => (
        <g key={i} transform={`translate(${i * 36.8} ${i * 21.2})`}>
          <F p="280,580 415,503 435,515 303,592" c="#a09ea2" />
          <F p="415,503 435,515 420,524 415,520" c="#3a3a3c" />
        </g>
      ))}

      {/* penthouse box */}
      <F p="422,412 660,277 1130,542 890,680" c={TOP} />
      <F p="472,412 663,303 1082,542 888,655" />
      <polygon points="474,412 663,304 663,360 525,440" fill="#cdcbcf" stroke="none" />
      <polygon points="663,304 1080,542 1035,569 663,360" fill={INNER} stroke="none" />
      <path d="M472,412L663,303L1082,542L888,655zM663,303V360" fill="none" />
      <F p="422,412 890,680 890,738 422,470" c={BLACKISH} />
      <F p="890,680 1130,542 1130,600 890,738" c={LIGHT} />
      <F p="890,738 1130,600 1130,627 890,765" c={BAND} />

      {/* selected wall and pointer */}
      <F p="550,820 671,890 671,1065 550,1000" c="#20262c" />
      <path d="M562,822V998L640,1044" fill="none" stroke="#1b3470" strokeWidth="20" />
      <path d="M550,820L570,808L673,866V1065L550,1000z" fill="none" stroke="#1c3c8c" strokeWidth="6" />
      <circle cx="580" cy="935" r="45" fill="#0a7a14" fillOpacity=".75" stroke="none" />
      <path d="M582,938L582,1010L600,996L614,1022L622,1018L610,990L628,986z" fill="#f0d2ee" stroke="#fff" />
    </svg>
  );
}

function ViewCube() {
  return (
    <svg width="88" height="130" viewBox="0 0 88 130" className="absolute right-0 top-[70px]" fill="none" stroke="#b9b9bc">
      <ellipse cx="90" cy="75" rx="79" ry="41" fill="#f5f5f7" strokeDasharray="2 1.500" />
      <ellipse cx="90" cy="74" rx="64" ry="30" fill="#fff" strokeDasharray="2 1.500" />
      <ellipse cx="76" cy="80" rx="36" ry="13" fill="#efeff0" stroke="none" />
      <ellipse cx="76" cy="80" rx="28" ry="10" fill="#dededf" stroke="none" />
      <path d="M41 27L75 11l35 16v40L75 88 42 66z" fill="#f3f3f5" stroke="#8b8b8e" />
      <path d="M41 27l34 20 35-20M75 47v41" stroke="#8b8b8e" />
      <path d="M69 30l13-7M58 24l21 12" stroke="#909094" />
      <g stroke="#a2a2a6">
        <path d="M48 47l18 10M52 44l2 4M61 48l-1 4M51 52v12M51 52l5 3v13M51 57l5 3M60 57v9M65 59v14l-3-2M86 63l-5 13M82 68l6 4" />
      </g>
      <path d="M26 46l12-5M28 43l10 10M31 52l8-8M34 40v14M28 49h11M15 98l22-6M19 90l15 16M22 104l12-16M27 89v18M17 100l18 2M23 94l11 4" strokeWidth="1.400" />
    </svg>
  );
}

function Viewport() {
  return (
    <main className="relative min-w-0 flex-1 overflow-hidden border-l-2 border-t-2 border-[#6e6e6e] bg-[#fefefe]">
      <Building />
      <ViewCube />
      <p className="absolute left-[75px] top-[721px] flex items-baseline whitespace-nowrap font-['Noto_Sans_CJK_SC',sans-serif] text-[32px] leading-[48px] text-[#c01a1a]">
        公众号：<span className="font-['Liberation_Serif',serif] text-[28px]">BIM</span>志
      </p>
      <div className="absolute bottom-0 left-[370px] right-0 flex h-[18px] items-center bg-[#f6f4f8] pl-[6px]">
        <svg width="6" height="9" viewBox="0 0 6 9" fill="none" stroke="#333" strokeWidth="1.600"><path d="M5 .5l-4 4 4 4" /></svg>
        <span className="ml-[632px] h-[16px] w-[17px] bg-[#cdcbcf]" />
      </div>
    </main>
  );
}

/* ---------- bottom ---------- */

function PickIcon({ children }: P) {
  return (
    <button type="button" className="flex w-[26px] justify-center">
      <Small>
        {children}
        <path d="M8 5l6 6-2.500.500 1.500 3-1.500 1-2-3L8 14z" fill="#fff" stroke="#222" strokeWidth=".9" />
      </Small>
    </button>
  );
}

function StatusBar() {
  return (
    <footer className="flex h-[25px] shrink-0 items-center border-t border-[#8c8c8c] bg-[#d4d4d4] pt-px text-xs text-[#2b2b2e]">
      <span className="w-[854px] shrink-0 pl-1">- 300mm : R0</span>
      <Small><path d="M1 8h4v7H1zM8 8h6v7H8zM6 1v6M10 1v6M4 4h9" stroke="#8a8a8d" /></Small>
      <div className="relative ml-2">
        <select aria-label="工作集" className="block h-[18px] w-[205px] appearance-none border border-[#c4c2c6] bg-white" />
        <span className="pointer-events-none absolute right-1 top-[6px] flex opacity-50"><Chevron /></span>
      </div>
      <span className="ml-2 flex"><Small><path d="M3 2h11l-5 4v4H6V6zM3 15l4-5" stroke="#8a8a8d" /></Small></span>
      <span className="ml-[5px] w-[32px]">:0</span>
      <Small><path d="M1 1h14v14H1zM1 4h14M4 7h2M8 7h5M4 10h2M8 10h5M4 13h9" fill="#fff" /></Small>
      <span className="ml-[10px] flex"><Small><path d="M2 2h12v12H2zM4 12V6h4v6M8 10l5-5v7" fill="#b6b6b9" stroke="#8a8a8d" /></Small></span>
      <div className="relative ml-2">
        <select aria-label="设计选项" className="block h-[18px] w-[205px] appearance-none border border-[#c4c2c6] bg-[#ececee] px-[2px] text-xs leading-4 text-[#7a7a7d]">
          <option>主模型</option>
        </select>
        <span className="pointer-events-none absolute right-1 top-[6px] flex opacity-50"><Chevron /></span>
      </div>
      <div className="ml-auto flex pr-px">
        <PickIcon><path d="M1 2h6v4H1zM9 2h6v4H9zM4 4h8" stroke="#c8981d" strokeWidth="1.600" /></PickIcon>
        <PickIcon>
          <path d="M1 9l8-7v7zM1 13h8" stroke="#2f7fc0" />
          <path d="M10 1l5 5M15 1l-5 5" stroke="#b3202f" strokeWidth="2" />
        </PickIcon>
        <PickIcon><path d="M2 1h8v3H8v4h3v2H1V8h2V4H2zM6 10v5" stroke="#c9702b" fill="#f2c79b" /></PickIcon>
        <PickIcon>
          <path d="M1 3l7-1v11l-7 2z" stroke="#2f7fc0" fill="#c9dff2" />
          <path d="M10 1l5 5M15 1l-5 5" stroke="#b3202f" strokeWidth="2" />
        </PickIcon>
        <PickIcon><path d="M5 0v10M0 5h10M3.500 1.500L5 0l1.500 1.500M1.500 3.500L0 5l1.500 1.500M3.500 8.500L5 10" stroke="#111" /></PickIcon>
        <span className="flex w-[24px] justify-center"><Small><circle cx="8" cy="8" r="5.500" stroke="#9b9b9e" strokeWidth="2.500" strokeDasharray="3 1.300" /></Small></span>
      </div>
    </footer>
  );
}

function Task({ children, open, label }: P & { open?: boolean; label: string }) {
  return (
    <button type="button" aria-label={label} className={clsx("flex h-[30px] w-7 shrink-0 items-center justify-center", open && "border-b-2 border-[#76b9ed]")}>
      <svg width="17" height="17" viewBox="0 0 17 17" fill="none">{children}</svg>
    </button>
  );
}

function Taskbar() {
  return (
    <footer className="flex h-[30px] shrink-0 items-center justify-between overflow-hidden bg-[#0a0a0a]">
      <div className="flex items-center gap-[9px]">
        <svg width="11" height="17" viewBox="0 0 11 17" fill="none"><circle cx="-1" cy="8" r="4.500" stroke="#e0602a" strokeWidth="2.500" /></svg>
        <Task label="CAD">
          <rect width="17" height="17" rx="2" fill="#1f63ab" />
          <path d="M5 5L2.500 7v4l2.500 1M6.500 12V5.500L9 4v8M6.500 9H9M11 5v7l3-1V6z" stroke="#d7ecff" strokeWidth="1" />
        </Task>
        <Task label="播放器">
          <rect width="17" height="17" rx="2" fill="#ecd26a" />
          <circle cx="8.500" cy="8.500" r="6" fill="#fff7d0" />
          <path d="M7 5.500l5 3-5 3z" fill="#b9c33a" />
        </Task>
        <Task label="工具">
          <path d="M3 1h5v6H3z" fill="#5584d6" />
          <path d="M9 1h5v6H9z" fill="#e5b64a" />
          <path d="M3 8h5v4l-5 4z" fill="#d25656" />
          <path d="M9 8h5v8l-5-4z" fill="#57a35a" />
        </Task>
        <Task label="浏览器">
          <path d="M8 2.500c2 0 6 7 6 9s-2 3-6 3-6-1-6-3 4-9 6-9z" stroke="#27a14b" strokeWidth="2.200" />
          <path d="M6 10l3-3 2 4z" stroke="#27a14b" />
        </Task>
        <Task label="相册">
          <path d="M8.500 8.500V.5a8 8 0 017 4z" fill="#f0813a" />
          <path d="M8.500 8.500l7-4a8 8 0 010 8z" fill="#e3405f" />
          <path d="M8.500 8.500l7 4a8 8 0 01-7 4z" fill="#8f4fd0" />
          <path d="M8.500 8.500v8a8 8 0 01-7-4z" fill="#3a86e8" />
          <path d="M8.500 8.500l-7 4a8 8 0 010-8z" fill="#43c06a" />
          <path d="M8.500 8.500l-7-4a8 8 0 017-4z" fill="#f3d44a" />
          <circle cx="8.500" cy="8.500" r="2" fill="#fff" />
        </Task>
        <Task label="文件资源管理器" open>
          <path d="M1 3h6l1 2h8v9H1z" fill="#f7e08f" />
          <path d="M4 9h9v7h-2v-3H6v3H4z" fill="#6cb5d9" />
        </Task>
        <Task label="WPS" open>
          <rect width="17" height="17" rx="2" fill="#2f7bd8" />
          <path d="M4 6l2 5.500 2.500-4 2.500 4L13 6" stroke="#fff" strokeWidth="1.200" />
        </Task>
        <Task label="Revit" open>
          <rect width="17" height="17" fill="#dfe9f6" />
          <text x="8.500" y="13.500" textAnchor="middle" fontSize="13" fontWeight="bold" fill="#1c57a5">R</text>
        </Task>
      </div>
      <div className="flex items-center gap-[7px] pr-[6px]">
        <svg width="17" height="17" viewBox="0 0 17 17"><path d="M1 4h15v10H1z" fill="#35b744" stroke="#7be07e" /><circle cx="8.500" cy="9" r="3.500" fill="#9a3324" /></svg>
        <svg width="17" height="17" viewBox="0 0 17 17" fill="none" stroke="#e0702c" strokeWidth="1.400"><rect x="6" y="1.500" width="5" height="9" rx="2.500" fill="#e0702c" /><path d="M3.500 8c0 6 10 6 10 0M8.500 12.500V15M5 15.500h7" /></svg>
        <svg width="17" height="17" viewBox="0 0 17 17" fill="none" stroke="#e0702c" strokeWidth="3"><circle cx="11" cy="6" r="4" /><path d="M8 9l-6 6" /></svg>
        <svg width="17" height="17" viewBox="0 0 17 17" fill="none" stroke="#eee" strokeWidth="1.300"><path d="M5 1h6v5H5zM3.500 6h9v10h-9zM7 3.500h2" /><path d="M10 13l2.500 2.500L17 10" stroke="#999" /></svg>
        <svg width="17" height="17" viewBox="0 0 17 17" fill="none" stroke="#eee" strokeWidth="1.300"><path d="M5 6h10v7H5zM16 8v3M0 5h4M3 2v6" /><path d="M8 8h6v3H8z" fill="#eee" /></svg>
        <svg width="17" height="17" viewBox="0 0 17 17" fill="none" stroke="#ddd" strokeWidth="1.300"><path d="M2 15C3 8 8 3 15 3M5.500 15c1-5 4-8 9.500-9M9 15c.5-3 3-5 6-5.500" /><circle cx="13.500" cy="14" r="1.300" fill="#eee" /></svg>
      </div>
    </footer>
  );
}

export default function App() {
  return (
    <div className="flex h-screen flex-col overflow-hidden bg-[#f6f4f8] font-['Open_Sans','Noto_Sans_CJK_SC',sans-serif]">
      <header className="shrink-0 bg-[#d6d6d6]">
        <TitleBar />
        <Tabs />
        <Ribbon />
      </header>
      <div className="mt-6 flex min-h-0 flex-1">
        <aside className="mr-1 flex w-[124px] shrink-0 flex-col overflow-hidden">
          <Properties />
          <Browser />
        </aside>
        <Viewport />
      </div>
      <StatusBar />
      <Taskbar />
    </div>
  );
}
